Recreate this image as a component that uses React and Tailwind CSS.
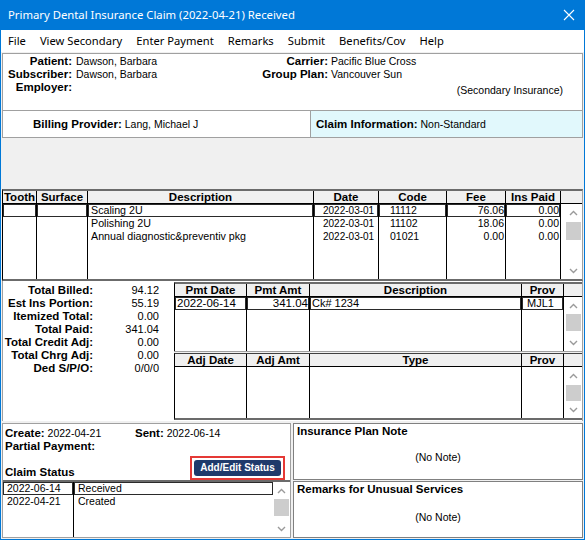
import React from 'react';

const ui = "font-['Liberation_Sans',Arial,sans-serif] text-[10.5px] leading-[13px] text-black";

const Chevron = ({ up }) => (
  <svg width="9" height="6" viewBox="0 0 9 6" className="block">
    <polyline points={up ? '1,5 4.5,1.5 8,5' : '1,1 4.5,4.5 8,1'} fill="none" stroke="#9a9a9a" strokeWidth="1.4" />
  </svg>
);

// windows style vertical scrollbar: arrow, track w/ thumb, arrow
function ScrollBar({ thumb = 'h-[17px]' }) {
  return (
    <div className="w-[17px] h-full flex flex-col bg-white">
      <div className="h-[17px] flex items-center justify-center"><Chevron up /></div>
      <div className="flex-1">
        <div className={`w-[15px] mx-auto bg-[#cdcdcd] ${thumb}`} />
      </div>
      <div className="h-[17px] flex items-center justify-center"><Chevron /></div>
    </div>
  );
}

function GridColumn({ title, width, rows = [], align = 'left', pad = '', size = '', boxed }) {
  const alignCls = align === 'right' ? 'text-right' : 'text-left';
  return (
    <div className={`${width} shrink-0 flex flex-col border-r border-black`}>
      <div className="h-[13px] border-b border-black bg-[#f0f0f0] text-center font-bold text-[11.5px] leading-[12px] whitespace-nowrap">{title}</div>
      <div className="flex-1 bg-white">
        {rows.map((r, i) => (
          <div
            key={i}
            className={`h-[13px] leading-[13px] whitespace-nowrap overflow-hidden ${size} ${alignCls} ${pad} ${i === 0 && boxed ? 'shadow-[inset_0_0_0_1px_#2a2a2a]' : ''}`}
          >
            {r}
          </div>
        ))}
      </div>
    </div>
  );
}

const procRows = {
  desc: ['Scaling 2U', 'Polishing 2U', 'Annual diagnostic&preventiv pkg'],
  date: ['2022-03-01', '2022-03-01', '2022-03-01'],
  code: ['11112', '11102', '01021'],
  fee: ['76.06', '18.06', '0.00'],
  paid: ['0.00', '0.00', '0.00'],
};

const totals = [
  ['Total Billed:', '94.12'],
  ['Est Ins Portion:', '55.19'],
  ['Itemized Total:', '0.00'],
  ['Total Paid:', '341.04'],
  ['Total Credit Adj:', '0.00'],
  ['Total Chrg Adj:', '0.00'],
  ['Ded S/P/O:', '0/0/0'],
];

const menu = ['File', 'View Secondary', 'Enter Payment', 'Remarks', 'Submit', 'Benefits/Cov', 'Help'];

export default function App() {
  return (
    <div className="w-[585px] h-[540px] bg-[#0078d7] flex flex-col overflow-hidden">
      {/* title bar */}
      <div className="h-[30px] shrink-0 flex items-center justify-between pl-[8px] pr-[10px] text-white font-['Noto_Sans','Open_Sans',sans-serif] text-[11.3px]">
        <span>Primary Dental Insurance Claim (2022-04-21) Received</span>
        <svg width="12" height="12" viewBox="0 0 12 12">
          <path d="M1 1 L11 11 M11 1 L1 11" stroke="white" strokeWidth="1.1" />
        </svg>
      </div>

      <div className={`flex-1 mx-px mb-px bg-[#f0f0f0] flex flex-col ${ui}`}>
        {/* menu */}
        <div className="h-[22px] shrink-0 bg-white flex items-center gap-[14px] pl-[7px] pb-px font-['Noto_Sans','Open_Sans',sans-serif] text-[11.2px]">
          {menu.map((m) => (
            <span key={m}>{m}</span>
          ))}
        </div>

        <div className="px-px pt-px flex flex-col">
          {/* patient header */}
          <div className="h-[58px] border border-[#a0a0a0] bg-white flex pt-px">
            <div className="w-[241px] shrink-0">
              {[['Patient:', 'Dawson, Barbara'], ['Subscriber:', 'Dawson, Barbara'], ['Employer:', '']].map(([l, v]) => (
                <div key={l} className="flex gap-[4px] h-[13px]">
                  <span className="w-[69px] text-right font-bold text-[11.5px]">{l}</span>
                  <span>{v}</span>
                </div>
              ))}
            </div>
            <div className="flex-1 pr-[19px]">
              {[['Carrier:', 'Pacific Blue Cross'], ['Group Plan:', 'Vancouver Sun']].map(([l, v]) => (
                <div key={l} className="flex gap-[3px] h-[13px]">
                  <span className="w-[84px] text-right font-bold text-[11.5px]">{l}</span>
                  <span>{v}</span>
                </div>
              ))}
              <div className="mt-[3px] text-right">(Secondary Insurance)</div>
            </div>
          </div>

          {/* billing / claim info */}
          <div className="h-[27px] border-x border-b border-[#a0a0a0] flex">
            <div className="w-[307px] shrink-0 bg-white flex items-center pl-[30px]">
              <span className="font-bold text-[11.5px]">Billing Provider:</span>&nbsp;Lang, Michael J
            </div>
            <div className="flex-1 border-l border-[#a0a0a0] bg-[#e1f8fc] flex items-center pl-[5px]">
              <span className="font-bold text-[11.5px]">Claim Information:</span>&nbsp;Non-Standard
            </div>
          </div>

          <div className="h-[51px]" />

          {/* procedures */}
          <div className="h-[92px] flex border-t-2 border-b-2 border-t-[#6b6b6b] border-b-[#6b6b6b] border-l border-l-black border-r border-r-[#a0a0a0]">
            <GridColumn title="Tooth" width="w-[34px]" rows={['', '', '']} boxed />
            <GridColumn title="Surface" width="w-[51px]" rows={['', '', '']} boxed />
            <GridColumn title="Description" width="w-[226px]" rows={procRows.desc} pad="pl-[3px]" size="text-[10.7px]" boxed />
            <GridColumn title="Date" width="w-[65px]" rows={procRows.date} pad="pl-[9px]" size="text-[10px]" boxed />
            <GridColumn title="Code" width="w-[68px]" rows={procRows.code} pad="pl-[11px]" size="text-[10.5px]" boxed />
            <GridColumn title="Fee" width="w-[59px]" rows={procRows.fee} align="right" pad="pr-px" size="text-[10.5px]" boxed />
            <GridColumn title="Ins Paid" width="w-[55px]" rows={procRows.paid} align="right" pad="pr-px" size="text-[10.5px]" boxed />
            <div className="flex-1 flex flex-col">
              <div className="h-[13px] border-b border-black bg-[#f0f0f0]" />
              <div className="flex-1 bg-white flex justify-end">
                <ScrollBar thumb="h-[18px] mt-px" />
              </div>
            </div>
          </div>

          {/* totals + payments */}
          <div className="h-[140px] bg-white flex border-l border-[#a0a0a0] border-r">
            <div className="w-[171px] shrink-0 pt-[3px]">
              {totals.map(([l, v]) => (
                <div key={l} className="flex h-[13px]">
                  <span className="w-[90px] text-right font-bold text-[11.5px] whitespace-nowrap">{l}</span>
                  <span className="w-[66px] text-right text-[11px]">{v}</span>
                </div>
              ))}
            </div>
            <div className="flex-1 flex flex-col pt-px">
              <div className="h-[69px] flex border-t-2 border-[#6b6b6b] border-l border-l-black">
                <GridColumn title="Pmt Date" width="w-[72px]" rows={['2022-06-14']} pad="pl-[2px]" size="text-[11.5px]" boxed />
                <GridColumn title="Pmt Amt" width="w-[63px]" rows={['341.04']} align="right" pad="pr-px" size="text-[11.5px]" boxed />
                <GridColumn title="Description" width="w-[212px]" rows={['Ck# 1234']} pad="pl-[2px]" size="text-[11px]" boxed />
                <GridColumn title="Prov" width="w-[42px]" rows={['MJL1']} pad="pl-[5px]" size="text-[11px]" boxed />
                <div className="flex-1 flex flex-col">
                  <div className="h-[13px] border-b border-black bg-[#f0f0f0]" />
                  <div className="flex-1 bg-white flex justify-end">
                    <ScrollBar thumb="h-[17px]" />
                  </div>
                </div>
              </div>
              <div className="h-[2px] border-t border-[#a0a0a0] bg-[#f0f0f0]" />
              <div className="h-[67px] flex border-t border-[#404040] border-b-2 border-b-[#6b6b6b] border-l border-l-black">
                <GridColumn title="Adj Date" width="w-[72px]" rows={[]} />
                <GridColumn title="Adj Amt" width="w-[63px]" rows={[]} />
                <GridColumn title="Type" width="w-[212px]" rows={[]} />
                <GridColumn title="Prov" width="w-[42px]" rows={[]} />
                <div className="flex-1 flex flex-col">
                  <div className="h-[13px] border-b border-black bg-[#f0f0f0]" />
                  <div className="flex-1 bg-white flex justify-end">
                    <ScrollBar thumb="h-[16px] mt-px" />
                  </div>
                </div>
              </div>
            </div>
          </div>

          {/* status + notes */}
          <div className="mt-[2px] h-[115px] flex gap-[2px]">
            <div className="w-[289px] shrink-0 border border-[#a0a0a0] bg-white flex flex-col">
              <div className="h-[56px] px-[2px] pt-[3px] flex flex-col">
                <div className="flex h-[13px]">
                  <span className="w-[130px]"><span className="font-bold text-[11.5px]">Create:</span> 2022-04-21</span>
                  <span><span className="font-bold text-[11.5px]">Sent:</span> 2022-06-14</span>
                </div>
                <div className="font-bold text-[11.5px] h-[13px]">Partial Payment:</div>
                <div className="flex items-end justify-between mt-[3px]">
                  <span className="font-bold text-[11.5px] pb-px">Claim Status</span>
                  <div className="mr-[3px] border-2 border-[#e53935] p-[2px] bg-white">
                    <div className="w-[87px] h-[16px] rounded-[3px] bg-[#1f3a6b] text-white font-bold text-[10px] leading-[16px] text-center">
                      Add/Edit Status
                    </div>
                  </div>
                </div>
              </div>
              <div className="flex-1 flex border-t-2 border-[#6b6b6b]">
                <div className="w-[71px] shrink-0 border-r border-black">
                  <div className="h-[13px] leading-[13px] pl-[4px] shadow-[inset_0_0_0_1px_#2a2a2a]">2022-06-14</div>
                  <div className="h-[13px] leading-[13px] pl-[4px]">2022-04-21</div>
                </div>
                <div className="w-[199px] shrink-0">
                  <div className="h-[13px] leading-[13px] pl-[4px] shadow-[inset_0_0_0_1px_#2a2a2a]">Received</div>
                  <div className="h-[13px] leading-[13px] pl-[4px]">Created</div>
                </div>
                <div className="flex-1">
                  <ScrollBar thumb="h-[17px]" />
                </div>
              </div>
            </div>
            <div className="flex-1 flex flex-col gap-px">
              <div className="h-[57px] border border-[#808080] bg-white flex flex-col px-[3px] pt-px">
                <div className="font-bold text-[11.5px]">Insurance Plan Note</div>
                <div className="mt-[13px] text-center">(No Note)</div>
              </div>
              <div className="flex-1 border border-[#808080] bg-white flex flex-col px-[3px] pt-px">
                <div className="font-bold text-[11.5px]">Remarks for Unusual Services</div>
                <div className="mt-[15px] text-center">(No Note)</div>
              </div>
            </div>
          </div>
        </div>
      </div>
    </div>
  );
}
